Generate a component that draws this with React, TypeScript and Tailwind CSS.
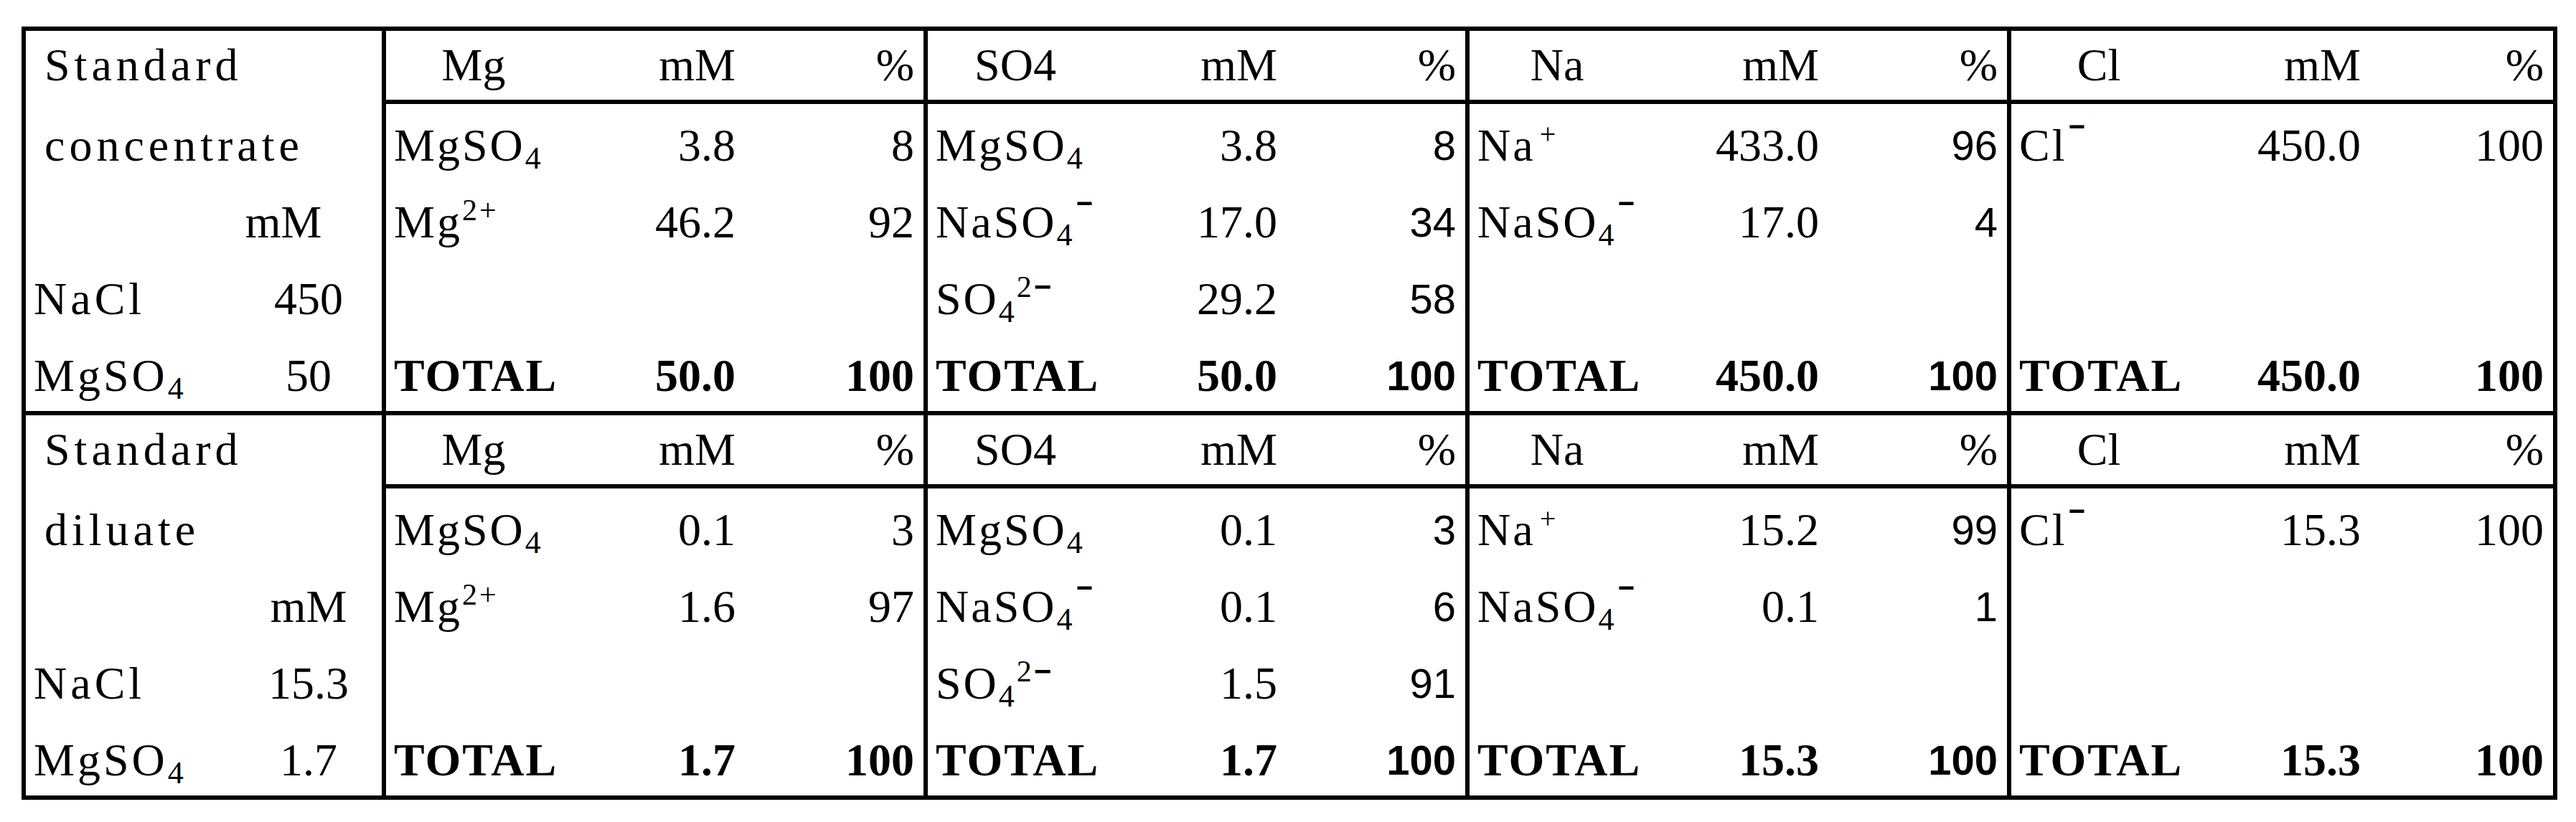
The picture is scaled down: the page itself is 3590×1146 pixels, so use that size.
import type { ReactNode } from 'react'
import clsx from 'clsx'

type Row = [ReactNode, string, string] | null

type Group = {
  name: string
  sansPct?: boolean
  rows: Row[]
}

type Block = {
  title: string
  subtitle: string
  unitShift?: boolean
  nacl: string
  mgso4: string
  groups: Group[]
}

const Minus = () => (
  <sup className="relative -top-[34px] ml-[2px] text-[40px] font-bold font-['Liberation_Sans',sans-serif]">−</sup>
)

const MgSO4 = (
  <>
    MgSO<sub className="text-[44px]">4</sub>
  </>
)
const Mg2 = (
  <>
    Mg<sup className="-top-[24px] text-[42px]">2+</sup>
  </>
)
const NaSO4 = (
  <>
    NaSO<sub className="text-[44px]">4</sub>
    <Minus />
  </>
)
const SO4 = (
  <>
    SO<sub className="text-[44px]">4</sub>
    <sup className="-top-[24px] text-[42px]">
      2<span className="font-bold font-['Liberation_Sans',sans-serif]">−</span>
    </sup>
  </>
)
const NaPlus = (
  <>
    Na<sup className="-top-[24px] ml-[6px] text-[40px]">+</sup>
  </>
)
const ClMinus = (
  <>
    Cl
    <Minus />
  </>
)
const TOTAL = <span className="font-bold tracking-[2px]">TOTAL</span>

const blocks: Block[] = [
  {
    title: 'Standard',
    subtitle: 'concentrate',
    unitShift: true,
    nacl: '450',
    mgso4: '50',
    groups: [
      { name: 'Mg', rows: [[MgSO4, '3.8', '8'], [Mg2, '46.2', '92'], null, [TOTAL, '50.0', '100']] },
      {
        name: 'SO4',
        sansPct: true,
        rows: [[MgSO4, '3.8', '8'], [NaSO4, '17.0', '34'], [SO4, '29.2', '58'], [TOTAL, '50.0', '100']],
      },
      { name: 'Na', sansPct: true, rows: [[NaPlus, '433.0', '96'], [NaSO4, '17.0', '4'], null, [TOTAL, '450.0', '100']] },
      { name: 'Cl', rows: [[ClMinus, '450.0', '100'], null, null, [TOTAL, '450.0', '100']] },
    ],
  },
  {
    title: 'Standard',
    subtitle: 'diluate',
    nacl: '15.3',
    mgso4: '1.7',
    groups: [
      { name: 'Mg', rows: [[MgSO4, '0.1', '3'], [Mg2, '1.6', '97'], null, [TOTAL, '1.7', '100']] },
      {
        name: 'SO4',
        sansPct: true,
        rows: [[MgSO4, '0.1', '3'], [NaSO4, '0.1', '6'], [SO4, '1.5', '91'], [TOTAL, '1.7', '100']],
      },
      { name: 'Na', sansPct: true, rows: [[NaPlus, '15.2', '99'], [NaSO4, '0.1', '1'], null, [TOTAL, '15.3', '100']] },
      { name: 'Cl', rows: [[ClMinus, '15.3', '100'], null, null, [TOTAL, '15.3', '100']] },
    ],
  },
]

function GroupCol({ group, last }: { group: Group; last: boolean }) {
  return (
    <div className={clsx('flex w-[755px] flex-col', !last && 'border-r-[6px] border-black')}>
      <div className="grid h-[102px] grid-cols-[244px_243px_1fr] items-center border-b-[6px] border-black">
        <div className="text-center">{group.name}</div>
        <div className="text-right">mM</div>
        <div className="pr-[13px] text-right">%</div>
      </div>
      {group.rows.map((row, i) => {
        const total = i === 3
        return (
          <div key={i} className="grid h-[107px] grid-cols-[244px_243px_1fr] items-center pt-[8px]">
            <div className="whitespace-nowrap pl-[11px] tracking-[3px]">{row?.[0]}</div>
            <div className={clsx('text-right', total && 'font-bold')}>{row?.[1]}</div>
            <div
              className={clsx(
                'pr-[13px] text-right',
                group.sansPct && "text-[58px] font-['Liberation_Sans',sans-serif]",
                total && 'font-bold'
              )}
            >
              {row?.[2]}
            </div>
          </div>
        )
      })}
    </div>
  )
}

function TableBlock({ block, first }: { block: Block; first: boolean }) {
  return (
    <div className={clsx('flex', !first && 'border-t-[6px] border-black')}>
      <div className="flex w-[502px] flex-col border-r-[6px] border-black">
        <div className="flex h-[102px] items-center pb-[6px] pl-[26px] tracking-[6px]">{block.title}</div>
        <div className="flex h-[107px] items-center pl-[26px] pt-[8px] tracking-[6px]">{block.subtitle}</div>
        <div className="grid h-[107px] grid-cols-[292px_1fr] items-center pt-[8px]">
          <div />
          <div className={clsx('text-center', block.unitShift && 'pr-[70px]')}>mM</div>
        </div>
        <div className="grid h-[107px] grid-cols-[292px_1fr] items-center pt-[8px]">
          <div className="pl-[11px] tracking-[5px]">NaCl</div>
          <div className="text-center">{block.nacl}</div>
        </div>
        <div className="grid h-[107px] grid-cols-[292px_1fr] items-center pt-[8px]">
          <div className="whitespace-nowrap pl-[11px] tracking-[4px]">{MgSO4}</div>
          <div className="text-center">{block.mgso4}</div>
        </div>
      </div>
      {block.groups.map((g, i) => (
        <GroupCol key={g.name} group={g} last={i === block.groups.length - 1} />
      ))}
    </div>
  )
}

export default function App() {
  return (
    <div className="min-h-screen w-[3590px] bg-white pt-[37px] font-['Liberation_Serif',serif] text-[64px] leading-none text-black">
      <div className="ml-[30px] w-fit border-[6px] border-black">
        {blocks.map((b, i) => (
          <TableBlock key={b.subtitle} block={b} first={i === 0} />
        ))}
      </div>
    </div>
  )
}
